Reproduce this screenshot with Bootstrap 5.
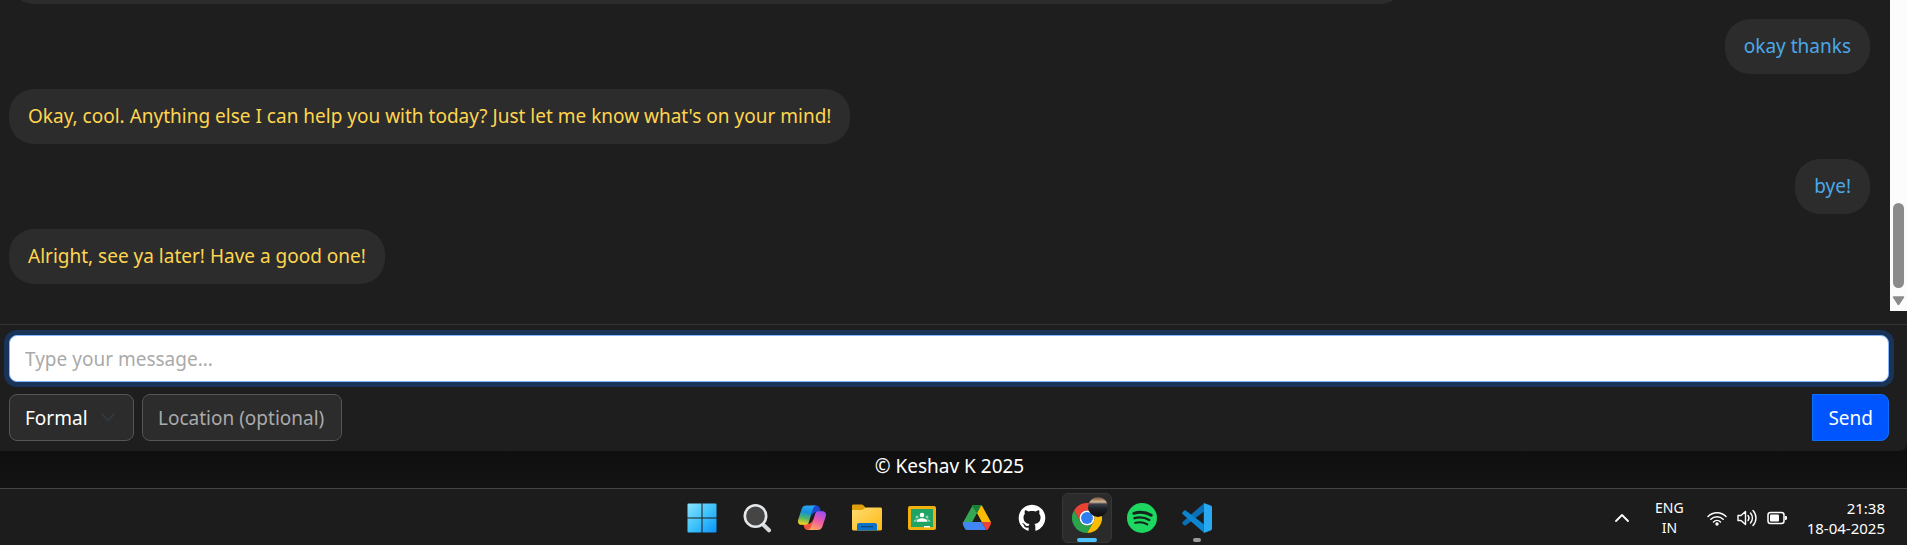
<!DOCTYPE html>
<html lang="en">
<head>
<meta charset="utf-8">
<meta name="viewport" content="width=device-width, initial-scale=1">
<title>Chat</title>
<link href="https://cdn.jsdelivr.net/npm/bootstrap@5.3.0/dist/css/bootstrap.min.css" rel="stylesheet">
<style>
  body { background: #121212; color: #fff; font-family: "Noto Sans", "Open Sans", sans-serif; font-size: 19px; line-height: 30px; }
  .chat-app { background: #1e1e1e; border-bottom-right-radius: 8px; min-height: 0; }
  .chat-scroll { min-height: 0; margin-bottom: 13px; }
  .chat-log { gap: 15px; padding: 0 20px 27px 9px; }
  .bubble { background: #2c2c2c; border-radius: 25px; padding: 12px 19px; line-height: 31px; max-width: 75%; }
  .bubble-bot { color: #ffd54f; }
  .bubble-user { color: #4aa8e8; }
  .bubble-long { width: 75%; height: 86px; }
  .scroll-track { width: 17px; background: #fcfcfc; padding-bottom: 5px; gap: 8px; }
  .scroll-thumb { width: 11px; height: 85px; border-radius: 6px; background: #8b8b8b; }

  .composer { border-top: 1px solid #333; padding: 10px 18px 10px 9px; gap: 12px; }
  .composer .form-control, .composer .form-select, .composer .btn { height: 47px; font-size: 19px; line-height: 30px; border-radius: 8px; padding: 7px 15px; }
  .composer .form-control::placeholder { color: #aaa; opacity: 1; }
  .composer .message-box { background: #fff; border-color: #86b7fe; box-shadow: 0 0 0 5px #1a3359; }
  .composer .dark-field { background-color: #2c2c2c; border-color: #555; color: #fff; }
  .composer .tone-select { width: 125px; background-size: 20px 15px; background-position: right 15px center; }
  .composer .place-box { width: 200px; }
  .composer .send-btn { background: #05f; border-color: #0d6efd; color: #fff; border-radius: 0 8px 8px 0; }

  .page-footer { padding: 0 8px 7px 0; background: linear-gradient(#0f0f0f, #131313); }

  .taskbar { background: #1c1c1c; border-top: 1px solid #454545; padding: 4px 8px 2px 0; }
  .app-row { gap: 5px; }
  .app-btn { width: 50px; height: 50px; border: 1px solid transparent; border-radius: 6px; background: none; padding: 0; color: #fff; }
  .app-btn.open { background: #2b2b2b; border-color: #363636; }
  .app-btn svg { width: 30px; height: 30px; display: block; }
  .run-mark { position: absolute; left: 50%; bottom: 0; transform: translateX(-50%); height: 4px; width: 8px; border-radius: 2px; background: #9a9a9a; }
  .open .run-mark { width: 20px; background: #4cc2ff; }
  .profile-pic { position: absolute; top: 3px; right: 3px; width: 20px; height: 20px; border-radius: 50%; background: linear-gradient(#6b4a38 0, #d8b896 25%, #39414d 35%, #1b1e24 60%, #0c0d0f 100%); }
  .tray svg { width: 20px; height: 20px; display: block; }
  .tray-btn { background: none; border: 0; padding: 0; color: #fff; }
  .lang { font-size: 14px; line-height: 20px; margin: 0 23px; }
  .tray-icons { gap: 10px; margin-right: 20px; }
  .clock { font-size: 15px; line-height: 20px; text-align: right; margin-right: 14px; }
</style>
</head>
<body class="d-flex flex-column vh-100 overflow-hidden">

<main class="chat-app flex-grow-1 d-flex flex-column">
  <div class="chat-scroll flex-grow-1 d-flex overflow-hidden">
    <div class="chat-log flex-grow-1 d-flex flex-column justify-content-end overflow-hidden">
      <div class="bubble bubble-bot bubble-long flex-shrink-0 align-self-start"></div>
      <div class="bubble bubble-user flex-shrink-0 align-self-end">okay thanks</div>
      <div class="bubble bubble-bot flex-shrink-0 align-self-start">Okay, cool. Anything else I can help you with today? Just let me know what's on your mind!</div>
      <div class="bubble bubble-user flex-shrink-0 align-self-end">bye!</div>
      <div class="bubble bubble-bot flex-shrink-0 align-self-start">Alright, see ya later! Have a good one!</div>
    </div>
    <div class="scroll-track flex-shrink-0 d-flex flex-column justify-content-end align-items-center" aria-hidden="true">
      <div class="scroll-thumb"></div>
      <svg width="13" height="10" viewBox="0 0 13 10"><path d="M1.500 1h10L6.500 8.500z" fill="#8b8b8b" stroke="#8b8b8b" stroke-width="1.500" stroke-linejoin="round"/></svg>
    </div>
  </div>

  <form class="composer d-flex flex-column" onsubmit="return false">
    <input type="text" class="form-control message-box" placeholder="Type your message..." aria-label="Message">
    <div class="d-flex justify-content-between">
      <div class="d-flex gap-2">
        <select class="form-select dark-field tone-select" aria-label="Tone"><option>Formal</option></select>
        <input type="text" class="form-control dark-field place-box" placeholder="Location (optional)" aria-label="Location">
      </div>
      <button type="submit" class="btn send-btn">Send</button>
    </div>
  </form>
</main>

<footer class="page-footer text-center">© Keshav K 2025</footer>

<nav class="taskbar d-flex align-items-center" aria-label="Taskbar">
  <div class="col"></div>
  <div class="app-row d-flex">
    <button class="app-btn d-flex align-items-center justify-content-center" aria-label="Start">
      <svg viewBox="0 0 30 30"><defs><linearGradient id="win" x1="0" y1="0" x2="1" y2="1"><stop offset="0" stop-color="#8be3ff"/><stop offset=".5" stop-color="#3fc3fa"/><stop offset="1" stop-color="#0a93fb"/></linearGradient></defs><path fill="url(#win)" d="M1.500.5H14.500V14.500H.5V1.500a1 1 0 0 1 1-1zM15.500.5H28.500a1 1 0 0 1 1 1V14.500H15.500zM.5 15.500H14.500V29.500H1.500a1 1 0 0 1-1-1zM15.500 15.500H29.500V28.500a1 1 0 0 1-1 1H15.500z"/></svg>
    </button>
    <button class="app-btn d-flex align-items-center justify-content-center" aria-label="Search">
      <svg viewBox="0 0 30 30"><path d="M20 20.500l7 6.800" stroke="#d5d9de" stroke-width="4" stroke-linecap="round"/><circle cx="13.500" cy="13" r="10.700" fill="#454545" stroke="#e4e7ea" stroke-width="2.600"/></svg>
    </button>
    <button class="app-btn d-flex align-items-center justify-content-center" aria-label="Copilot">
      <svg viewBox="0 0 30 30"><defs><linearGradient id="cpa" x1=".5" y1="0" x2=".3" y2="1"><stop offset="0" stop-color="#2aa6f0"/><stop offset=".35" stop-color="#168fd8"/><stop offset=".65" stop-color="#4fb56a"/><stop offset="1" stop-color="#ffd21c"/></linearGradient><linearGradient id="cpb" x1=".7" y1="0" x2=".3" y2="1"><stop offset="0" stop-color="#a04df0"/><stop offset=".5" stop-color="#ee5aa4"/><stop offset="1" stop-color="#ffa95c"/></linearGradient></defs>
      <path fill="#1b48cf" d="M14 2.500h5.500c2 0 2.900 1.300 3.500 3.200l1 3.200h-4c-3 0-4.300 1.500-5 4z"/>
      <path fill="#f0513c" d="M16 27h-5.500c-2 0-2.900-1.300-3.500-3.200l-1-3h4.500c3 0 4.300-1.500 5-4z"/>
      <path fill="url(#cpa)" d="M9.500 2.500h10c-2 .3-3 1.500-3.600 3.500l-4 13c-.6 1.900-1.600 2.800-3.500 2.800H4.800c-3.200 0-4.400-2.200-3.600-5L4.600 6c.8-2.400 2.300-3.500 4.900-3.500z"/>
      <path fill="url(#cpb)" d="M20.500 27h-10c2-.3 3-1.500 3.600-3.500l4-12.500c.6-1.900 1.600-2.800 3.500-2.800h3.600c3.200 0 4.400 2.200 3.600 5l-3.400 10.300c-.8 2.400-2.300 3.500-4.900 3.500z"/></svg>
    </button>
    <button class="app-btn d-flex align-items-center justify-content-center" aria-label="File Explorer">
      <svg viewBox="0 0 30 30"><defs><linearGradient id="fold" x1="0" y1="0" x2="1" y2="1"><stop offset="0" stop-color="#ffdc75"/><stop offset="1" stop-color="#fcb912"/></linearGradient></defs><path fill="#e0a00c" d="M0 3c0-1 .6-1.500 1.500-1.500h8c.8 0 1.300.3 1.800.8L14 5h14v6H0z"/><path fill="url(#fold)" d="M0 7h9.500c1 0 1.600-.3 2.200-.9l1-.9c.5-.5 1-.7 1.800-.7h14c.9 0 1.500.6 1.500 1.500V26c0 .8-.6 1.400-1.400 1.400H1.400C.6 27.400 0 26.800 0 26z"/><path fill="#0c72c8" d="M5 27.400V22a2 2 0 0 1 2-2h16a2 2 0 0 1 2 2v5.400z"/><path d="M9 23.700h12" stroke="#06478b" stroke-width="1.300"/></svg>
    </button>
    <button class="app-btn d-flex align-items-center justify-content-center" aria-label="Classroom">
      <svg viewBox="0 0 30 30"><rect x="1" y="3" width="28" height="24" rx="2" fill="#f0b010"/><rect x="4" y="6" width="22" height="18" fill="#1fa463"/><circle cx="15" cy="12" r="2.300" fill="#fff"/><path fill="#fff" d="M9.500 18.700c0-2.200 3-3.400 5.500-3.400s5.500 1.200 5.500 3.400z"/><g fill="#8fd3b2"><circle cx="10" cy="14" r="1.500"/><circle cx="20" cy="14" r="1.500"/><path d="M6.500 18.700c0-1.600 1.500-2.500 3.500-2.500l-1.500 2.500zM23.500 18.700c0-1.600-1.500-2.500-3.500-2.500l1.500 2.500z"/></g><path fill="#fff" d="M17 23h6v1.500h-6z"/></svg>
    </button>
    <button class="app-btn d-flex align-items-center justify-content-center" aria-label="Drive">
      <svg viewBox="0 0 30 30"><path fill="#34a853" d="M10.600 2.300h8.800l-4.600 8.500L6.400 26.600c-1.200.7-2.500.3-3.200-.7L1.200 22c-.5-1-.4-1.800 0-2.700l9-16.200z"/><path fill="#188038" d="M10.600 2.300h8.600L15 10.200l-4.600-6.600z"/><path fill="#fbbc04" d="M15 10.200l4.300-7.900c.5.200.8.500 1 1L28.900 19h-9.200z"/><path fill="#ea4335" d="M19.700 19h9.300c.2 1 0 2-.5 2.900l-2 3.800c-.5.800-1.300 1.200-2.300 1.200z"/><path fill="#1d1d1d" d="M15 10.500L19.600 19h-9.200z"/><path fill="#4285f4" d="M1 19h18.700l4.500 8H5.500c-1.100 0-1.900-.4-2.400-1.300l-1.900-3.600C.8 21 .7 20 1 19z"/></svg>
    </button>
    <button class="app-btn d-flex align-items-center justify-content-center" aria-label="GitHub">
      <svg viewBox="-1 -1 18 18"><path fill="#fff" d="M8 0C3.580 0 0 3.580 0 8c0 3.540 2.290 6.530 5.470 7.590.4.070.55-.17.55-.38 0-.19-.01-.82-.01-1.490-2.010.37-2.530-.49-2.690-.94-.09-.23-.48-.94-.82-1.130-.28-.15-.68-.52-.01-.53.63-.01 1.080.58 1.230.82.72 1.210 1.870.87 2.330.66.070-.52.28-.87.51-1.070-1.780-.2-3.640-.89-3.640-3.950 0-.87.31-1.590.82-2.150-.08-.2-.36-1.020.08-2.120 0 0 .67-.21 2.200.82.64-.18 1.320-.27 2-.27s1.360.09 2 .27c1.530-1.040 2.200-.82 2.200-.82.44 1.100.16 1.920.08 2.120.51.56.82 1.270.82 2.150 0 3.070-1.870 3.750-3.650 3.950.29.25.54.73.54 1.480 0 1.070-.01 1.930-.01 2.200 0 .21.15.46.55.38A8.010 8.010 0 0 0 16 8c0-4.420-3.580-8-8-8"/></svg>
    </button>
    <button class="app-btn open position-relative d-flex align-items-center justify-content-center" aria-label="Chrome">
      <svg viewBox="0 0 48 48"><path fill="#ea4335" d="M3.200 12A24 24 0 0 1 44.800 12H24a12 12 0 0 0-10.400 18z"/><path fill="#fbbc04" d="M44.800 12A24 24 0 0 1 24 48l10.400-18A12 12 0 0 0 24 12z"/><path fill="#2ba24c" d="M24 48A24 24 0 0 1 3.200 12l10.400 18A12 12 0 0 0 34.400 30z"/><circle cx="24" cy="24" r="12" fill="#fff"/><circle cx="24" cy="24" r="9.500" fill="#2f7df0"/></svg>
      <span class="profile-pic"></span><span class="run-mark"></span>
    </button>
    <button class="app-btn d-flex align-items-center justify-content-center" aria-label="Spotify">
      <svg viewBox="0 0 30 30"><circle cx="15" cy="15" r="15" fill="#1ed760"/><g fill="none" stroke="#15241a" stroke-linecap="round"><path d="M6.800 10.300c6-1.700 12.500-1 17.500 1.900" stroke-width="2.900"/><path d="M7.500 15.200c5-1.400 10.500-.7 14.800 1.800" stroke-width="2.400"/><path d="M8 19.800c4.300-1.100 8.700-.6 12.400 1.600" stroke-width="1.900"/></g></svg>
    </button>
    <button class="app-btn position-relative d-flex align-items-center justify-content-center" aria-label="Visual Studio Code">
      <svg viewBox="0 0 30 30"><path fill="#0a6fb5" d="M.8 18.700l21-18.300V8.700L4 22.300c-.6.500-1.200.4-1.700 0L.7 20.900c-.6-.6-.6-1.500.1-2.200z"/><path fill="#0d86d2" d="M.8 11.300l21 18.300v-8.300L4 7.700c-.6-.5-1.200-.4-1.700 0L.7 9.100c-.6.600-.6 1.500.1 2.200z"/><path fill="#2aa9f3" d="M21.800 0L28.700 2.600c.8.400 1.300 1 1.300 1.900v21c0 .9-.5 1.500-1.300 1.900L21.800 30z"/></svg>
      <span class="run-mark"></span>
    </button>
  </div>

  <div class="col tray d-flex align-items-center justify-content-end">
    <button class="tray-btn" aria-label="Show hidden icons"><svg viewBox="0 0 20 20"><path d="M4 13l6-6 6 6" fill="none" stroke="#fff" stroke-width="1.800" stroke-linecap="round" stroke-linejoin="round"/></svg></button>
    <div class="lang text-center">ENG<br>IN</div>
    <div class="tray-icons d-flex" aria-hidden="true">
      <svg viewBox="0 0 20 20"><g fill="none" stroke="#fff" stroke-width="1.500" stroke-linecap="round"><path d="M1 8.500a12.700 12.700 0 0 1 18 0"/><path d="M3.800 11.300a8.800 8.800 0 0 1 12.400 0"/><path d="M6.500 14a5 5 0 0 1 7 0"/></g><circle cx="10" cy="16" r="1.700" fill="#fff"/></svg>
      <svg viewBox="0 0 20 20"><g fill="none" stroke="#fff" stroke-width="1.400" stroke-linecap="round" stroke-linejoin="round"><path d="M1 7.500h3L8.500 3.500v13L4 12.500H1z"/><path d="M11 7.500a4 4 0 0 1 0 5M13.500 5a7.500 7.500 0 0 1 0 10M16 2.500a11 11 0 0 1 0 15"/></g></svg>
      <svg viewBox="0 0 20 20"><rect x="1" y="4.500" width="16" height="11" rx="2.500" fill="none" stroke="#fff" stroke-width="1.500"/><rect x="3" y="6.500" width="9" height="7" rx="1" fill="#fff"/><path d="M18 8h.8c.7 0 1.200.5 1.200 1.200v1.600c0 .7-.5 1.200-1.200 1.200H18z" fill="#fff"/></svg>
    </div>
    <div class="clock">21:38<br>18-04-2025</div>
  </div>
</nav>

<script src="https://cdn.jsdelivr.net/npm/bootstrap@5.3.0/dist/js/bootstrap.bundle.min.js"></script>
</body>
</html>
